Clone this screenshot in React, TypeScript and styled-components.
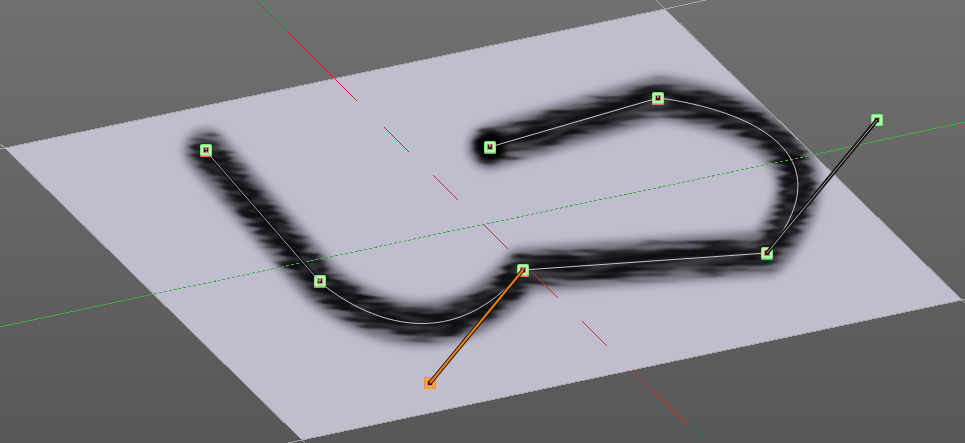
import React from "react";
import styled, { createGlobalStyle } from "styled-components";

const GlobalStyle = createGlobalStyle`
  body { margin: 0; background: #575757; }
`;

const Viewport = styled.main`
  display: flex;
  min-height: 100vh;
  background: linear-gradient(#707070, #575757);
`;

const Scene = styled.svg`
  display: block;
  flex: 1;
  width: 100%;
  height: 100vh;
`;

const Axis = styled.line<{ $color: string }>`
  stroke: ${(p) => p.$color};
  stroke-width: 1;
  shape-rendering: crispEdges;
`;

const Edge = styled.path`
  fill: none;
  stroke: #a5a5a5;
  stroke-width: 1;
  shape-rendering: crispEdges;
`;

const Brush = styled.path<{ $width: number; $alpha: number }>`
  fill: none;
  stroke: #08080a;
  stroke-width: ${(p) => p.$width};
  stroke-opacity: ${(p) => p.$alpha};
  stroke-linecap: round;
  stroke-linejoin: round;
`;

const Curve = styled.path<{ $color: string; $width: number }>`
  fill: none;
  stroke: ${(p) => p.$color};
  stroke-width: ${(p) => p.$width};
`;

const RED = "#bd3236";
const GREEN = "#3fae3f";
const PLANE = "M5 148 L665 9 L962 300 L302 440 Z";
const SPLINE_START = "M206 151 L320 282";
const SPLINE_REST =
  "M320 282 C320 282 430 383 523 270 L767 253 C877 120 658 98 658 98 L490 147";
const SPLINE =
  "M206 151 L320 282 C320 282 430 383 523 270 L767 253 C877 120 658 98 658 98 L490 147";

const redDashes = [
  [255, 0, 357, 101],
  [384, 127, 409, 152],
  [433, 175, 458, 200],
  [483, 224, 508, 249],
  [533, 273, 558, 298],
  [582, 321, 607, 346],
  [632, 370, 706, 443],
];

/* Long bristle marks follow the two straight runs; the curved runs are finer. */
const fineRuns = "M206 151 L320 282 C320 282 430 383 523 270 M767 253 C877 120 658 98 658 98";
const coarseRuns = [
  { x: 523, y: 270, length: 245, angle: -4 },
  { x: 490, y: 147, length: 175, angle: -16 },
];

type Knot = { x: number; y: number; tint: "red" | "plain" | "orange" };

const knots: Knot[] = [
  { x: 205, y: 150, tint: "red" },
  { x: 319, y: 281, tint: "red" },
  { x: 489, y: 147, tint: "red" },
  { x: 522, y: 270, tint: "red" },
  { x: 657, y: 98, tint: "red" },
  { x: 766, y: 253, tint: "red" },
  { x: 876, y: 120, tint: "plain" },
  { x: 429, y: 383, tint: "orange" },
];

function KnotMark({ x, y, tint }: Knot) {
  const orange = tint === "orange";
  return (
    <g transform={`translate(${x} ${y})`}>
      {tint === "red" && <rect x="-5" y="-4" width="12" height="11" rx="1" fill="#f06a68" />}
      <rect x="-5" y="-6" width="12" height="12" rx="2" fill={orange ? "#ff8a14" : "#73ed73"} />
      <rect x="-4" y="-5" width="10" height="10" rx="1" fill={orange ? "#ffa653" : "#b4ffae"} />
      <rect
        x="-2"
        y="-3"
        width="6"
        height="6"
        fill={orange ? "#f08a20" : tint === "red" ? "#b98873" : "#7fdc7f"}
      />
      <rect x="-1" y="-2" width="4" height="4" fill="#242226" />
      {tint === "red" && <rect x="0" y="-2" width="2" height="2" fill="#d66c64" />}
    </g>
  );
}

export default function App() {
  return (
    <>
      <GlobalStyle />
      <Viewport>
        <Scene viewBox="0 0 965 443" preserveAspectRatio="xMidYMid slice" role="img" aria-label="Spline painted on a plane">
          <defs>
            <clipPath id="plane">
              <path d={PLANE} />
            </clipPath>
            <filter id="paint" filterUnits="userSpaceOnUse" x="150" y="50" width="720" height="330" colorInterpolationFilters="sRGB">
              <feGaussianBlur in="SourceGraphic" stdDeviation="3" result="soft" />
              <feTurbulence type="fractalNoise" baseFrequency="0.03 0.2" numOctaves="1" seed="8" result="noise" />
              <feDisplacementMap in="soft" in2="noise" scale="20" xChannelSelector="R" yChannelSelector="A" result="edge" />
              <feGaussianBlur in="edge" stdDeviation="1 0.5" />
            </filter>
            <filter id="halo" filterUnits="userSpaceOnUse" x="150" y="50" width="720" height="330">
              <feGaussianBlur stdDeviation="4" />
            </filter>
            <filter id="core" filterUnits="userSpaceOnUse" x="450" y="110" width="80" height="80">
              <feGaussianBlur stdDeviation="3" />
            </filter>
            <filter id="fine" filterUnits="userSpaceOnUse" x="150" y="50" width="720" height="330" colorInterpolationFilters="sRGB">
              <feGaussianBlur in="SourceAlpha" stdDeviation="3" result="area" />
              <feTurbulence type="fractalNoise" baseFrequency="0.04 0.16" numOctaves="1" seed="3" />
              <feColorMatrix values="0 0 0 0 0.3  0 0 0 0 0.3  0 0 0 0 0.33  3 0 0 0 -1.2" />
              <feComposite in2="area" operator="in" />
            </filter>
            <filter id="coarse" filterUnits="userSpaceOnUse" x="-20" y="-30" width="290" height="60" colorInterpolationFilters="sRGB">
              <feGaussianBlur in="SourceAlpha" stdDeviation="3" result="area" />
              <feTurbulence type="fractalNoise" baseFrequency="0.016 0.11" numOctaves="2" seed="12" />
              <feColorMatrix values="0 0 0 0 0.32  0 0 0 0 0.32  0 0 0 0 0.35  3.4 0 0 0 -1.35" />
              <feComposite in2="area" operator="in" />
            </filter>
          </defs>

          <path d={PLANE} fill="#bfbdce" />
          <g clipPath="url(#plane)">
            <g filter="url(#halo)">
              <Brush d={SPLINE} $width={44} $alpha={0.42} />
            </g>
            <g filter="url(#paint)">
              <Brush d={SPLINE} $width={26} $alpha={0.92} />
            </g>
            <g filter="url(#fine)">
              <Brush d={fineRuns} $width={22} $alpha={0.6} />
            </g>
            {coarseRuns.map((run) => (
              <g key={run.x} transform={`translate(${run.x} ${run.y}) rotate(${run.angle})`}>
                <g filter="url(#coarse)">
                  <Brush d={`M0 0 L${run.length} 0`} $width={22} $alpha={0.65} />
                </g>
              </g>
            ))}
            <g filter="url(#core)">
              <circle cx="490" cy="147" r="15" fill="#000" />
            </g>
          </g>

          <Edge d={PLANE} />
          <Edge d="M0 149 L5 148 L0 144 M656 0 L665 9 L706 0 M288 443 L302 440 L305 443 M962 300 L965 299 M962 300 L965 303" />

          {redDashes.map(([x1, y1, x2, y2]) => (
            <Axis key={x1} x1={x1} y1={y1} x2={x2} y2={y2} $color={RED} />
          ))}
          <Axis x1="0" y1="327" x2="154" y2="294" $color={GREEN} />
          <Axis x1="154" y1="294" x2="812" y2="155" $color={GREEN} strokeDasharray="3 2" />
          <Axis x1="812" y1="155" x2="965" y2="122" $color={GREEN} />

          <Curve d={SPLINE_START} $color="#08080a" $width={3} />
          <Curve d={SPLINE_REST} $color="#c5c3d0" $width={1} />

          {knots.map((k) => (
            <KnotMark key={k.x} {...k} />
          ))}

          <Curve d={SPLINE_START} $color="#aaa8b3" $width={1} />
          <Curve d="M877 120 L767 253" $color="#111" $width={4} />
          <Curve d="M877 120 L767 253" $color="#b4b2b0" $width={1} />
          <Curve d="M523 270 L430 383" $color="#16130f" $width={4} />
          <Curve d="M523 270 L430 383" $color="#f58208" $width={2} />
        </Scene>
      </Viewport>
    </>
  );
}
